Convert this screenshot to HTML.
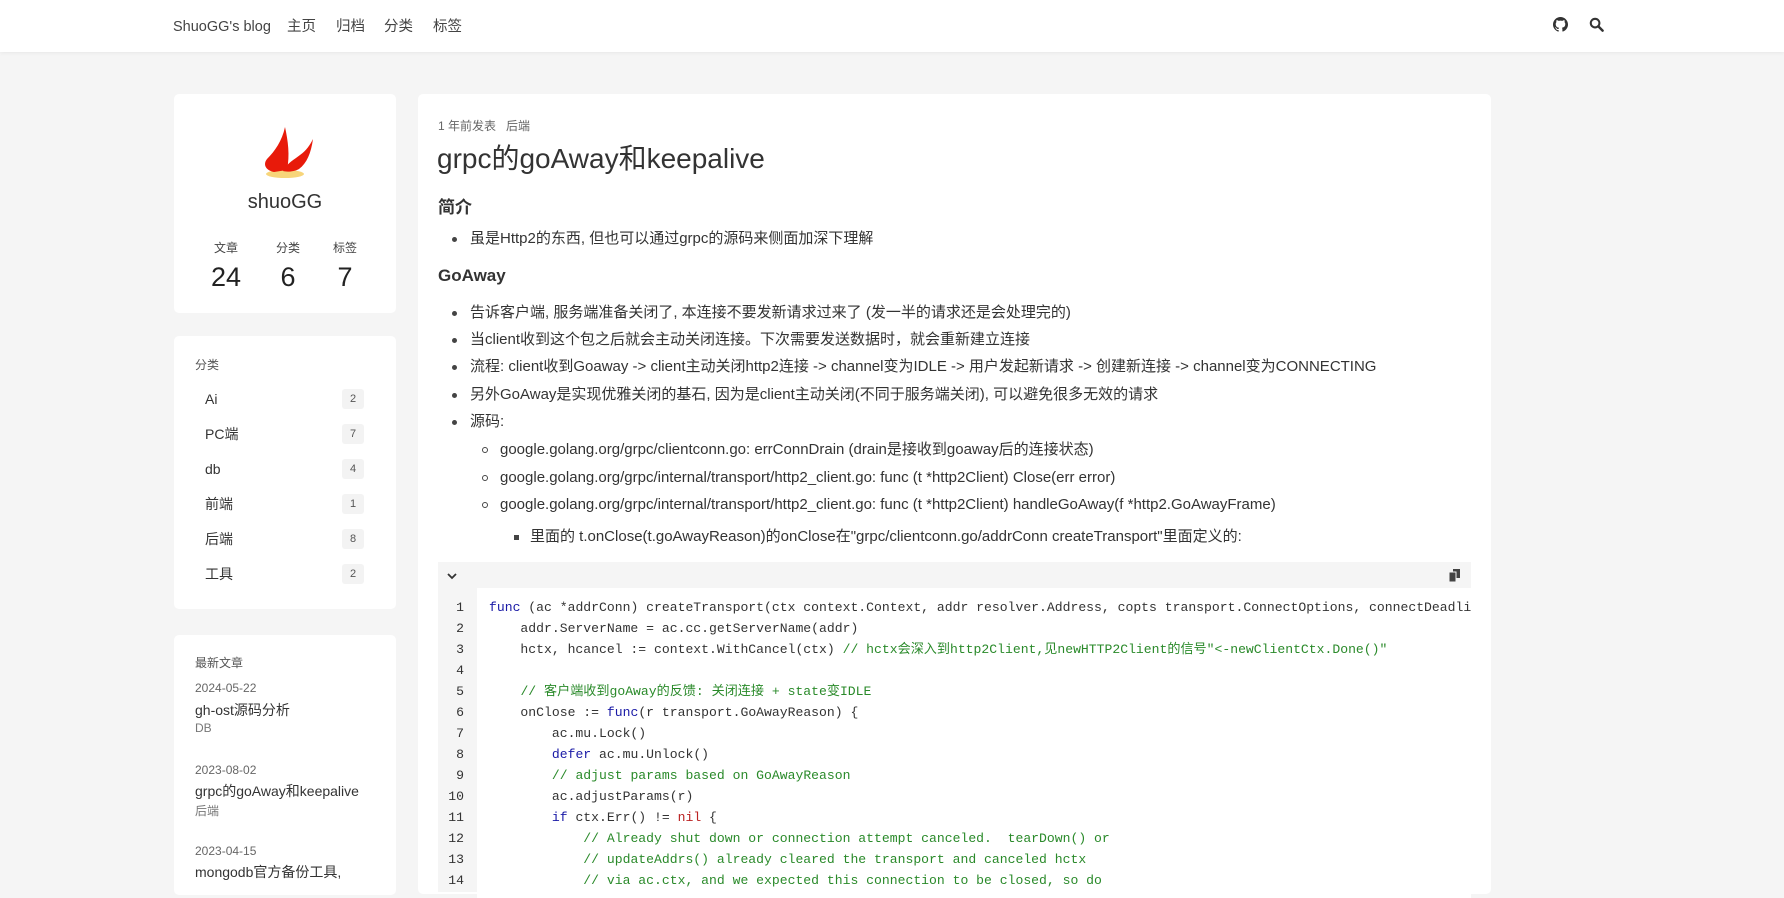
<!DOCTYPE html>
<html><head><meta charset="utf-8">
<style>
*{margin:0;padding:0;box-sizing:border-box}
body{width:1784px;height:884px;overflow:hidden;background:#f5f5f5;font-family:"Liberation Sans","Noto Sans CJK SC",sans-serif;color:#333;position:relative}
.a{position:absolute;white-space:nowrap}
.hdr{position:absolute;left:0;top:0;width:1784px;height:52px;background:#fff;box-shadow:0 1px 4px rgba(0,0,0,.06)}
.nav{font-size:14.5px;color:#444;top:16px;line-height:22px;height:22px}
.card{position:absolute;background:#fff;border-radius:5px}
.t15{font-size:15px;line-height:20px;color:#333}
.dot{position:absolute;width:5px;height:5px;border-radius:50%;background:#444}
.circ{position:absolute;width:6px;height:6px;border-radius:50%;border:1px solid #444}
.sq{position:absolute;width:5px;height:5px;background:#444}
.badge{position:absolute;left:342px;width:22px;height:20px;background:#f3f3f3;border-radius:3px;font-size:11px;color:#555;text-align:center;line-height:20px}
.cat{position:absolute;left:205px;font-size:14px;color:#333;line-height:20px}
.code{font-family:"Liberation Mono","Noto Sans CJK SC",monospace;font-size:13.1px;color:#333;line-height:21px;white-space:pre}
.k{color:#1a1aa6}.c{color:#2a8a2a}.n{color:#b22}
</style></head><body>
<div class="hdr"></div>
<div class="a nav" style="left:173px">ShuoGG's blog</div>
<div class="a nav" style="left:287px">主页</div>
<div class="a nav" style="left:336px">归档</div>
<div class="a nav" style="left:384px">分类</div>
<div class="a nav" style="left:433px">标签</div>
<svg class="a" style="left:1553px;top:17px" width="15" height="15" viewBox="0 0 16 16"><path fill="#333" d="M8 0C3.6 0 0 3.6 0 8c0 3.5 2.3 6.5 5.5 7.6.4.1.5-.2.5-.4v-1.4c-2.2.5-2.7-1-2.7-1-.4-.9-.9-1.2-.9-1.2-.7-.5.1-.5.1-.5.8.1 1.2.8 1.2.8.7 1.3 1.9.9 2.3.7.1-.5.3-.9.5-1.1-1.8-.2-3.6-.9-3.6-4 0-.9.3-1.6.8-2.1-.1-.2-.4-1 .1-2.1 0 0 .7-.2 2.2.8.6-.2 1.3-.3 2-.3s1.4.1 2 .3c1.5-1 2.2-.8 2.2-.8.4 1.1.2 1.9.1 2.1.5.6.8 1.3.8 2.1 0 3.1-1.9 3.7-3.6 3.9.3.3.5.8.5 1.5v2.2c0 .2.1.5.6.4C13.7 14.5 16 11.5 16 8c0-4.4-3.6-8-8-8z"/></svg>
<svg class="a" style="left:1589px;top:17px" width="15" height="15" viewBox="0 0 16 16"><circle cx="6.5" cy="6.5" r="4.6" fill="none" stroke="#333" stroke-width="2.2"/><path d="M10 10l4.5 4.5" stroke="#333" stroke-width="2.6" stroke-linecap="round"/></svg>

<div class="card" style="left:174px;top:94px;width:222px;height:219px"></div>
<svg class="a" style="left:260px;top:125px" width="56" height="56" viewBox="0 0 56 56">
<ellipse cx="25" cy="49" rx="19" ry="4" fill="#f7d57a"/>
<path d="M25 2 C28 16 30 30 27 45 L14 47 C5 45 3 39 7 34 C15 26 22 16 25 2Z" fill="#e81a0a"/>
<path d="M53 14 C51 28 47 38 39 44 C34 47 26 47 23 46 C27 38 35 34 40 30 C46 26 50 20 53 14Z" fill="#e81a0a"/>
</svg>
<div class="a" style="left:174px;width:222px;text-align:center;top:191px;font-size:20px;color:#333">shuoGG</div>
<div class="a" style="left:206px;width:40px;text-align:center;top:239px;font-size:12px;color:#444">文章</div>
<div class="a" style="left:268px;width:40px;text-align:center;top:239px;font-size:12px;color:#444">分类</div>
<div class="a" style="left:325px;width:40px;text-align:center;top:239px;font-size:12px;color:#444">标签</div>
<div class="a" style="left:196px;width:60px;text-align:center;top:262px;font-size:27px;color:#222">24</div>
<div class="a" style="left:258px;width:60px;text-align:center;top:262px;font-size:27px;color:#222">6</div>
<div class="a" style="left:315px;width:60px;text-align:center;top:262px;font-size:27px;color:#222">7</div>

<div class="card" style="left:174px;top:336px;width:222px;height:273px"></div>
<div class="a" style="left:195px;top:356px;font-size:12px;color:#555">分类</div>
<div class="cat" style="top:389px">Ai</div><div class="badge" style="top:389px">2</div>
<div class="cat" style="top:424px">PC端</div><div class="badge" style="top:424px">7</div>
<div class="cat" style="top:459px">db</div><div class="badge" style="top:459px">4</div>
<div class="cat" style="top:494px">前端</div><div class="badge" style="top:494px">1</div>
<div class="cat" style="top:529px">后端</div><div class="badge" style="top:529px">8</div>
<div class="cat" style="top:564px">工具</div><div class="badge" style="top:564px">2</div>

<div class="card" style="left:174px;top:635px;width:222px;height:260px"></div>
<div class="a" style="left:195px;top:654px;font-size:12px;color:#555">最新文章</div>
<div class="a" style="left:195px;top:681px;font-size:12px;color:#666">2024-05-22</div>
<div class="a" style="left:195px;top:700px;font-size:14px;color:#333">gh-ost源码分析</div>
<div class="a" style="left:195px;top:721px;font-size:12px;color:#777">DB</div>
<div class="a" style="left:195px;top:763px;font-size:12px;color:#666">2023-08-02</div>
<div class="a" style="left:195px;top:781px;font-size:14px;color:#333">grpc的goAway和keepalive</div>
<div class="a" style="left:195px;top:802px;font-size:12px;color:#777">后端</div>
<div class="a" style="left:195px;top:844px;font-size:12px;color:#666">2023-04-15</div>
<div class="a" style="left:195px;top:862px;font-size:14px;color:#333">mongodb官方备份工具,</div>

<div class="card" style="left:418px;top:94px;width:1073px;height:800px"></div>
<div class="a" style="left:438px;top:117px;font-size:12px;color:#666">1 年前发表 &nbsp; 后端</div>
<div class="a" style="left:437px;top:137px;font-size:28px;color:#333">grpc的goAway和keepalive</div>
<div class="a" style="left:438px;top:193px;font-size:17px;font-weight:bold;color:#333">简介</div>
<div class="dot" style="left:452px;top:237px"></div>
<div class="a t15" style="left:470px;top:229px">虽是Http2的东西, 但也可以通过grpc的源码来侧面加深下理解</div>
<div class="a" style="left:438px;top:266px;font-size:17px;font-weight:bold;color:#333">GoAway</div>
<div class="dot" style="left:452px;top:311px"></div><div class="a t15" style="left:470px;top:303px">告诉客户端, 服务端准备关闭了, 本连接不要发新请求过来了 (发一半的请求还是会处理完的)</div>
<div class="dot" style="left:452px;top:338px"></div><div class="a t15" style="left:470px;top:330px">当client收到这个包之后就会主动关闭连接。下次需要发送数据时，就会重新建立连接</div>
<div class="dot" style="left:452px;top:365px"></div><div class="a t15" style="left:470px;top:357px">流程: client收到Goaway -&gt; client主动关闭http2连接 -&gt; channel变为IDLE -&gt; 用户发起新请求 -&gt; 创建新连接 -&gt; channel变为CONNECTING</div>
<div class="dot" style="left:452px;top:393px"></div><div class="a t15" style="left:470px;top:385px">另外GoAway是实现优雅关闭的基石, 因为是client主动关闭(不同于服务端关闭), 可以避免很多无效的请求</div>
<div class="dot" style="left:452px;top:420px"></div><div class="a t15" style="left:470px;top:412px">源码:</div>
<div class="circ" style="left:482px;top:447px"></div><div class="a t15" style="left:500px;top:440px">google.golang.org/grpc/clientconn.go: errConnDrain (drain是接收到goaway后的连接状态)</div>
<div class="circ" style="left:482px;top:475px"></div><div class="a t15" style="left:500px;top:468px">google.golang.org/grpc/internal/transport/http2_client.go: func (t *http2Client) Close(err error)</div>
<div class="circ" style="left:482px;top:502px"></div><div class="a t15" style="left:500px;top:495px">google.golang.org/grpc/internal/transport/http2_client.go: func (t *http2Client) handleGoAway(f *http2.GoAwayFrame)</div>
<div class="sq" style="left:514px;top:535px"></div><div class="a t15" style="left:530px;top:527px">里面的 t.onClose(t.goAwayReason)的onClose在"grpc/clientconn.go/addrConn createTransport"里面定义的:</div>

<div class="a" style="left:438px;top:562px;width:1033px;height:330px;background:#f5f5f5"></div>
<svg class="a" style="left:446px;top:572px" width="12" height="8" viewBox="0 0 12 8"><path d="M2 2l4 4 4-4" fill="none" stroke="#333" stroke-width="1.8"/></svg>
<svg class="a" style="left:1449px;top:569px" width="12" height="13" viewBox="0 0 12 13"><rect x="4" y="0" width="7" height="9" fill="#444"/><rect x="0" y="3" width="7" height="10" fill="#444" stroke="#f5f5f5" stroke-width="1"/></svg>
<div class="a" style="left:477px;top:588px;width:994px;height:310px;background:#fff"></div>
<div class="a code" style="left:438px;top:597px;width:26px;text-align:right;color:#333">1
2
3
4
5
6
7
8
9
10
11
12
13
14</div>
<div class="a code" style="left:489px;top:597px;width:982px;overflow:hidden"><span class="k">func</span> (ac *addrConn) createTransport(ctx context.Context, addr resolver.Address, copts transport.ConnectOptions, connectDeadline time.Time) error {
    addr.ServerName = ac.cc.getServerName(addr)
    hctx, hcancel := context.WithCancel(ctx) <span class="c">// hctx会深入到http2Client,见newHTTP2Client的信号"&lt;-newClientCtx.Done()"</span>

    <span class="c">// 客户端收到goAway的反馈: 关闭连接 + state变IDLE</span>
    onClose := <span class="k">func</span>(r transport.GoAwayReason) {
        ac.mu.Lock()
        <span class="k">defer</span> ac.mu.Unlock()
        <span class="c">// adjust params based on GoAwayReason</span>
        ac.adjustParams(r)
        <span class="k">if</span> ctx.Err() != <span class="n">nil</span> {
            <span class="c">// Already shut down or connection attempt canceled.  tearDown() or</span>
            <span class="c">// updateAddrs() already cleared the transport and canceled hctx</span>
            <span class="c">// via ac.ctx, and we expected this connection to be closed, so do</span></div>
</body></html>
